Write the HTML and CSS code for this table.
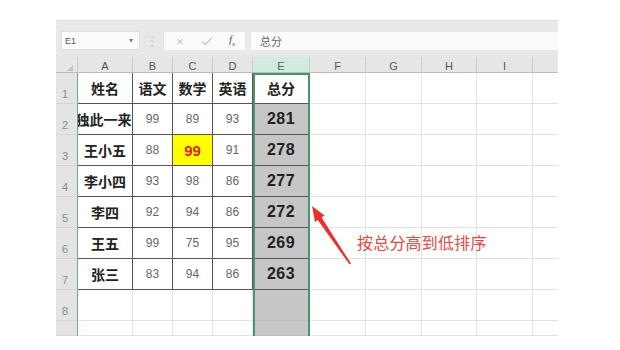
FILE: index.html
```html
<!DOCTYPE html>
<html lang="zh">
<head>
<meta charset="utf-8">
<link rel="stylesheet" href="styles.css">
</head>
<body>
<div class="app">
  <div class="toolbar">
    <div class="namebox"><span>E1</span><span class="caret">▾</span></div>
    <div class="sep">⋮</div>
    <div class="fxbox">
      <span class="ico x">×</span>
      <svg class="ico chk" width="12" height="10" viewBox="0 0 12 10"><path d="M1 5.5 L4.5 8.5 L11 1.5" fill="none" stroke="#c4c4c4" stroke-width="1.2"/></svg>
      <span class="ico fx">f<sub>x</sub></span>
    </div>
    <div class="formula">总分</div>
  </div>
  <div class="sheet">
    <div class="ch corner"><span class="tri"></span></div>
    <div class="ch">A</div><div class="ch">B</div><div class="ch">C</div><div class="ch">D</div>
    <div class="ch sel">E</div><div class="ch">F</div><div class="ch">G</div><div class="ch">H</div><div class="ch">I</div><div class="ch last"></div>

    <div class="rh">1</div>
    <div class="t nm">姓名</div><div class="t nm">语文</div><div class="t nm">数学</div><div class="t nm">英语</div>
    <div class="t nm e1">总分</div>
    <div class="c"></div><div class="c"></div><div class="c"></div><div class="c"></div><div class="c last"></div>

    <div class="rh">2</div>
    <div class="t nm clip"><span>独此一来</span></div><div class="t n">99</div><div class="t n">89</div><div class="t n">93</div>
    <div class="t tot">281</div>
    <div class="c"></div><div class="c"></div><div class="c"></div><div class="c"></div><div class="c last"></div>

    <div class="rh">3</div>
    <div class="t nm">王小五</div><div class="t n">88</div><div class="t n hl">99</div><div class="t n">91</div>
    <div class="t tot">278</div>
    <div class="c"></div><div class="c"></div><div class="c"></div><div class="c"></div><div class="c last"></div>

    <div class="rh">4</div>
    <div class="t nm">李小四</div><div class="t n">93</div><div class="t n">98</div><div class="t n">86</div>
    <div class="t tot">277</div>
    <div class="c"></div><div class="c"></div><div class="c"></div><div class="c"></div><div class="c last"></div>

    <div class="rh">5</div>
    <div class="t nm">李四</div><div class="t n">92</div><div class="t n">94</div><div class="t n">86</div>
    <div class="t tot">272</div>
    <div class="c"></div><div class="c"></div><div class="c"></div><div class="c"></div><div class="c last"></div>

    <div class="rh">6</div>
    <div class="t nm">王五</div><div class="t n">99</div><div class="t n">75</div><div class="t n">95</div>
    <div class="t tot">269</div>
    <div class="c"></div><div class="c"></div><div class="c"></div><div class="c"></div><div class="c last"></div>

    <div class="rh">7</div>
    <div class="t nm">张三</div><div class="t n">83</div><div class="t n">94</div><div class="t n">86</div>
    <div class="t tot">263</div>
    <div class="c"></div><div class="c"></div><div class="c"></div><div class="c"></div><div class="c last"></div>

    <div class="rh">8</div>
    <div class="c"></div><div class="c"></div><div class="c"></div><div class="c"></div>
    <div class="c eg"></div>
    <div class="c"></div><div class="c"></div><div class="c"></div><div class="c"></div><div class="c last"></div>

    <div class="rh"></div>
    <div class="c"></div><div class="c"></div><div class="c"></div><div class="c"></div>
    <div class="c eg"></div>
    <div class="c"></div><div class="c"></div><div class="c"></div><div class="c"></div><div class="c last"></div>

    <div class="selbox"><span class="handle"></span></div>
  </div>
</div>

<svg class="arrow" width="60" height="80" viewBox="300 200 60 80">
  <polygon points="312,206 324.5,215.5 321.6,217.6 351,263.6 349.6,264.6 317.8,220 315,222" fill="#e8322c"/>
</svg>
<div class="note">按总分高到低排序</div>
</body>
</html>
```

FILE: styles.css
```css
body {
  margin: 0;
  background: #ffffff;
  font-family: "Liberation Sans", "Noto Sans CJK SC", sans-serif;
  position: relative;
  height: 350px;
  overflow: hidden;
}

.app {
  margin: 20px 0 0 56px;
  width: 502px;
  background: #e8e8e8;
}

.toolbar {
  height: 37px;
  box-sizing: border-box;
  padding-top: 10px;
  border-top: 1px solid #dedede;
  display: flex;
  align-items: flex-start;
}

.namebox {
  margin-left: 5px;
  width: 79px;
  height: 19px;
  box-sizing: border-box;
  background: #fbfbfb;
  border: 1px solid #e0e0e0;
  display: flex;
  align-items: center;
  justify-content: space-between;
  padding: 0 6px 0 3px;
  font-size: 9px;
  color: #555;
}

.caret {
  font-size: 8px;
  color: #888;
}

.sep {
  width: 23px;
  height: 19px;
  display: flex;
  align-items: center;
  justify-content: center;
  color: #c8c8c8;
  font-size: 12px;
}

.fxbox {
  width: 83px;
  height: 20px;
  background: #fbfbfb;
  border: 1px solid #e6e6e6;
  box-sizing: border-box;
  display: flex;
  align-items: center;
  gap: 0;
  padding-left: 9px;
}

.ico { display: block; }
.x { width: 14px; color: #c4c4c4; font-size: 13px; text-align: center; }
.chk { margin-left: 14px; }
.fx {
  margin-left: 16px;
  font-family: "Liberation Serif", serif;
  font-style: italic;
  font-size: 11px;
  color: #555;
}
.fx sub { font-size: 7px; }

.formula {
  margin-left: 5px;
  flex: 1;
  height: 20px;
  background: #fbfbfb;
  border-top: 1px solid #e6e6e6;
  border-bottom: 1px solid #e6e6e6;
  box-sizing: border-box;
  padding-left: 9px;
  font-family: "Noto Sans CJK SC", sans-serif;
  font-size: 11px;
  line-height: 18px;
  color: #666;
}

.sheet {
  position: relative;
  display: grid;
  grid-template-columns: 22px 55px 40px 40px 40px 57px 56px 56px 55px 56px 25px;
  grid-template-rows: 16px repeat(8, 31px) 15px;
  background: #ffffff;
}

.sheet > div {
  box-sizing: border-box;
  display: flex;
  align-items: center;
  justify-content: center;
  overflow: hidden;
}

.ch {
  background: #e6e6e6;
  border-right: 1px solid #cdcdcd;
  border-bottom: 1px solid #b9b9b9;
  font-size: 11px;
  color: #555;
  padding-top: 2px;
}
.ch.last { border-right: none; }
.ch.sel {
  background: #d1ebdc;
  color: #3d7456;
}
.corner { position: relative; }
.tri {
  width: 0;
  height: 0;
  border-left: 6px solid transparent;
  border-bottom: 6px solid #c2c2c2;
  margin: 4px 0 0 6px;
}

.rh {
  background: #e4e4e4;
  border-right: 1px solid #6aa786;
  border-bottom: 1px solid #d4d4d4;
  font-size: 11px;
  color: #8a8a8a;
  align-items: flex-end !important;
  justify-content: flex-start !important;
  padding: 0 0 3px 6px;
}

.c {
  border-right: 1px solid #e2e2e2;
  border-bottom: 1px solid #e2e2e2;
}
.c.last { border-right: none; }
.c.eg { background: #c7c7c7; border-bottom-color: #bdbdbd; }

.t {
  border-right: 1px solid #555;
  border-bottom: 1px solid #555;
}

.nm {
  font-family: "Noto Sans CJK SC", sans-serif;
  font-weight: 700;
  font-size: 14px;
  color: #222;
}
.clip span { white-space: nowrap; flex: none; margin-left: -3px; }

.n {
  font-size: 12px;
  color: #666;
}
.hl {
  background: #ffff00;
  color: #e2231a;
  font-weight: 700;
  font-size: 15px;
}

.tot {
  background: #c6c6c6;
  font-weight: 700;
  font-size: 16px;
  letter-spacing: 0.5px;
  color: #222;
}
.e1 { background: #ffffff; }

.selbox {
  position: absolute;
  left: 197px;
  top: 16px;
  width: 57px;
  bottom: 0;
  border: 2px solid #4a9669;
  border-bottom: none;
  box-sizing: border-box;
}
.handle {
  position: absolute;
  right: -4px;
  top: -3px;
  width: 4px;
  height: 4px;
  background: #2f6f4a;
}

.arrow {
  position: absolute;
  left: 300px;
  top: 200px;
}

.note {
  position: absolute;
  left: 357px;
  top: 231px;
  font-family: "Noto Sans CJK SC", sans-serif;
  font-size: 16px;
  line-height: 22px;
  color: #e5463f;
  letter-spacing: 0.2px;
}
```
